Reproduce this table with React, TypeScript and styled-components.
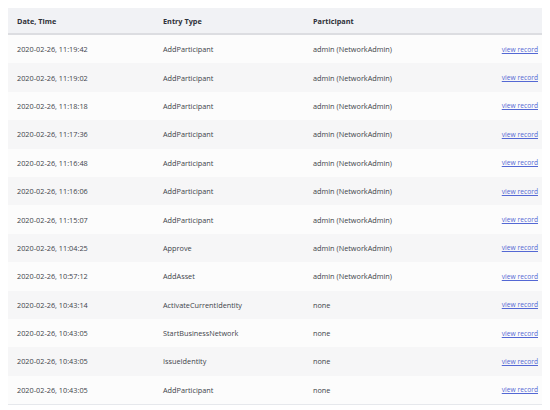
import React from "react";
import styled, { createGlobalStyle } from "styled-components";

const Global = createGlobalStyle`
  html, body { margin: 0; padding: 0; background: #ffffff; }
  body { font-family: "Open Sans", "Noto Sans", sans-serif; }
`;

const Page = styled.div`
  padding: 8px 8px 0 8px;
`;

const Table = styled.div`
  display: flex;
  flex-direction: column;
  border-bottom: 1px solid #e6e8ec;
`;

const Row = styled.div<{ $shade?: boolean }>`
  display: grid;
  grid-template-columns: 146px 150px 1fr auto;
  align-items: center;
  height: 28.4px;
  padding: 0 4px 0 9px;
  background: ${(p) => (p.$shade ? "#f6f6f7" : "#fcfcfc")};
  font-size: 7.3px;
  color: #40434a;
`;

const HeaderRow = styled(Row)`
  height: 25px;
  background: #f1f2f5;
  border-bottom: 2px solid #dcdde1;
  font-weight: 700;
  color: #2e3038;
`;

const Cell = styled.div`
  white-space: nowrap;
`;

const Link = styled.a`
  color: #5468d4;
  font-size: 6.7px;
  text-decoration: underline;
  cursor: pointer;
  justify-self: end;
`;

const rows: [string, string, string][] = [
  ["2020-02-26, 11:19:42", "AddParticipant", "admin (NetworkAdmin)"],
  ["2020-02-26, 11:19:02", "AddParticipant", "admin (NetworkAdmin)"],
  ["2020-02-26, 11:18:18", "AddParticipant", "admin (NetworkAdmin)"],
  ["2020-02-26, 11:17:36", "AddParticipant", "admin (NetworkAdmin)"],
  ["2020-02-26, 11:16:48", "AddParticipant", "admin (NetworkAdmin)"],
  ["2020-02-26, 11:16:06", "AddParticipant", "admin (NetworkAdmin)"],
  ["2020-02-26, 11:15:07", "AddParticipant", "admin (NetworkAdmin)"],
  ["2020-02-26, 11:04:25", "Approve", "admin (NetworkAdmin)"],
  ["2020-02-26, 10:57:12", "AddAsset", "admin (NetworkAdmin)"],
  ["2020-02-26, 10:43:14", "ActivateCurrentIdentity", "none"],
  ["2020-02-26, 10:43:05", "StartBusinessNetwork", "none"],
  ["2020-02-26, 10:43:05", "IssueIdentity", "none"],
  ["2020-02-26, 10:43:05", "AddParticipant", "none"],
];

export default function App() {
  return (
    <>
      <Global />
      <Page>
        <Table>
          <HeaderRow>
            <Cell>Date, Time</Cell>
            <Cell>Entry Type</Cell>
            <Cell>Participant</Cell>
            <Cell />
          </HeaderRow>
          {rows.map((r, i) => (
            <Row key={i} $shade={i % 2 === 1}>
              <Cell>{r[0]}</Cell>
              <Cell>{r[1]}</Cell>
              <Cell>{r[2]}</Cell>
              <Link>view record</Link>
            </Row>
          ))}
        </Table>
      </Page>
    </>
  );
}
